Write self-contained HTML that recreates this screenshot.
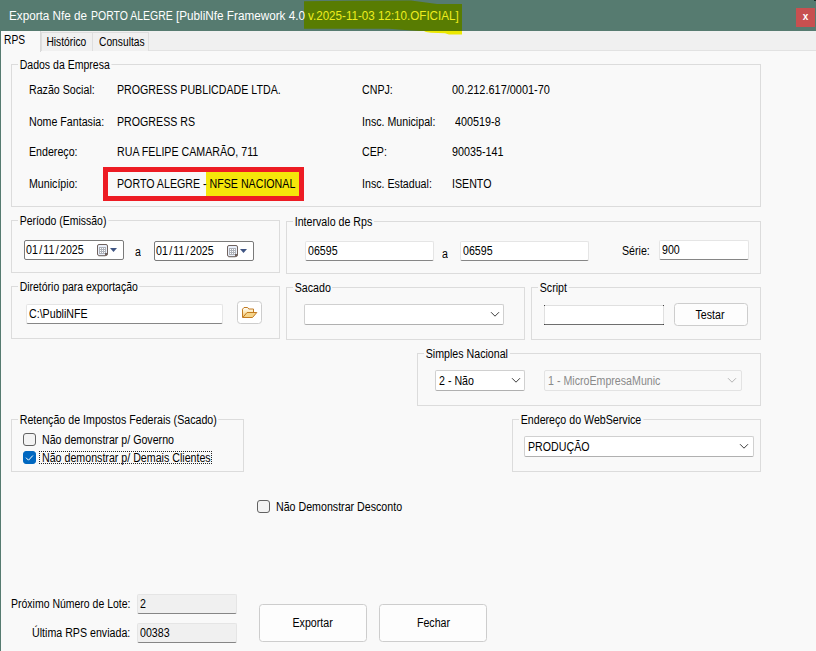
<!DOCTYPE html>
<html><head><meta charset="utf-8">
<style>
*{box-sizing:border-box;margin:0;padding:0}
html,body{width:816px;height:651px;overflow:hidden}
body{background:#f9f9f9;font-family:"Liberation Sans",sans-serif;font-size:11px;color:#000;position:relative}
.abs,.t,.gb,.in,.btn,.cb,.leg{position:absolute}
.t{white-space:nowrap;line-height:15px;height:15px;font-size:12.5px;transform:scaleX(.852);transform-origin:0 0}
.s{display:inline-block;font-size:12.5px;transform:scaleX(.852);transform-origin:0 50%;white-space:nowrap}
.btn .s,.tab .s{transform-origin:50% 50%}
.tab .s{transform:scaleX(.82)}
#tab0 .s{transform-origin:0 50%}
#title{z-index:3;left:0;top:0;width:816px;height:31px;background:#567b70}
#title .txt{position:absolute;z-index:4;left:10px;top:9px;font-size:12px;color:#fff;white-space:nowrap;line-height:15px;transform:scaleX(.951);transform-origin:0 0}
#hl{position:absolute;left:304px;top:1px;width:158px;height:29px;background:#587b03}
#hl2{position:absolute;left:426px;top:29px;width:36px;height:4px;background:#e6e600;border-radius:2px}
#close{z-index:5;left:796px;top:8px;width:19px;height:19px;background:#c75050;color:#fff;font-weight:bold;font-size:10px;text-align:center;line-height:18px}
#lb{left:0;top:30px;width:1px;height:621px;background:#567b70}
#strip{left:1px;top:31px;width:815px;height:20px;background:#f0f0f0;border-bottom:1px solid #e2e2e2}
.tab{position:absolute;top:32px;height:19px;background:#f0f0f0;border:1px solid #dedede;border-bottom:none;font-size:11px;line-height:18px;text-align:center}
#tab0{left:1px;top:31px;width:40px;height:21px;background:#f9f9f9;border:1px solid #d9d9d9;border-bottom:none;border-top:none;border-left:none;text-align:left;padding-left:3px;line-height:19px}
.gb{border:1px solid #dcdcdc}
.leg{background:#f9f9f9;padding:0 2px;line-height:15px;height:15px;white-space:nowrap;font-size:12.5px;transform:scaleX(.852);transform-origin:0 0}
.in{background:#fff;border:1px solid #e5e5e5;border-bottom:1px solid #868686;border-radius:2px;height:20px;line-height:19px;padding-left:3px;white-space:nowrap}
.ro{background:#f0f0f0}
.btn{background:#fdfdfd;border:1px solid #cdcdcd;border-radius:3.5px;text-align:center}
.sel{position:absolute;background:#fff;border:1px solid #d0d0d0;border-bottom:1px solid #b0b0b0;border-radius:2px;height:21px;line-height:20px;padding-left:3px;white-space:nowrap}
.chk{position:absolute;width:13px;height:13px;border:1px solid #626262;border-radius:3px;background:#f3f3f3}
.n{transform:scaleX(.875)!important}
svg.abs{z-index:2}
.sl{padding:0 1.5px}
</style></head><body>
<div id="title" class="abs"><svg style="position:absolute;left:296px;top:0;z-index:3" width="180" height="38" viewBox="296 0 180 38"><polygon points="304,1.3 350,0.8 411,0.6 424,2.2 437,4 462,4 462,31 420,31 405,30 389,28.7 304,28.7" fill="#587c02"/><polygon points="424,31 462,31 462,34.6 449,34.4 445,33.2 431,32.8 426,32" fill="#ece800"/></svg><div class="txt" style="left:9px;transform:scaleX(.974)">Exporta Nfe de</div><div class="txt" style="left:90.6px;transform:scaleX(.873)">PORTO ALEGRE</div><div class="txt" style="left:175.8px;transform:scaleX(.977)">[PubliNfe Framework 4.0</div><div class="txt" style="left:308.2px;transform:scaleX(.968);color:#eeee1e">v.2025-11-03 12:10.OFICIAL]</div></div>
<div id="close" class="abs">x</div>
<div id="lb" class="abs"></div>
<div class="abs" style="z-index:5;left:814px;top:0;width:2px;height:1px;background:#1c2a26"></div>
<div id="strip" class="abs"></div>
<div id="tab0" class="tab"><span class="s">RPS</span></div>
<div class="tab" style="left:41px;width:52px;padding-right:2px"><span class="s">Histórico</span></div>
<div class="tab" style="left:92px;width:57px;padding-left:1px"><span class="s">Consultas</span></div>

<!-- Dados da Empresa -->
<div class="gb" style="left:11px;top:64px;width:750px;height:143px"></div>
<div class="leg" style="left:18px;top:58px;transform:scaleX(.842)">Dados da Empresa</div>
<div class="t" style="left:29px;top:83px">Razão Social:</div>
<div class="t" style="left:117px;top:83px">PROGRESS PUBLICDADE LTDA.</div>
<div class="t" style="left:29px;top:115px">Nome Fantasia:</div>
<div class="t" style="left:117px;top:115px">PROGRESS RS</div>
<div class="t" style="left:29px;top:145px">Endereço:</div>
<div class="t" style="left:117px;top:145px">RUA FELIPE CAMARÃO, 711</div>
<div class="t" style="left:29px;top:177px">Município:</div>
<div class="abs" style="left:206px;top:171px;width:94px;height:26px;background:#f5e60a"></div>
<div class="abs" style="left:103px;top:167px;width:201px;height:34px;border:5px solid #ed1c24"></div>
<div class="t" style="left:117px;top:177px">PORTO ALEGRE - NFSE NACIONAL</div>
<div class="t" style="left:362px;top:83px">CNPJ:</div>
<div class="t n" style="left:452px;top:83px">00.212.617/0001-70</div>
<div class="t" style="left:362px;top:115px">Insc. Municipal:</div>
<div class="t" style="left:455px;top:115px;transform:scaleX(.862)">400519-8</div>
<div class="t" style="left:362px;top:145px">CEP:</div>
<div class="t" style="left:452px;top:145px;transform:scaleX(.862)">90035-141</div>
<div class="t" style="left:362px;top:177px">Insc. Estadual:</div>
<div class="t" style="left:452px;top:177px">ISENTO</div>

<!-- Periodo -->
<div class="gb" style="left:11px;top:220px;width:269px;height:53px"></div>
<div class="leg" style="left:18px;top:214px;transform:scaleX(.8375)">Período (Emissão)</div>
<div class="in" style="left:24px;top:240px;width:100px;border:1px solid #7a7a7a;border-radius:2px;padding-left:1px;line-height:19px"><span class="s">01<span class="sl">/</span>11<span class="sl">/</span>2025</span></div>
<svg class="abs" style="left:97px;top:244px" width="20" height="13" viewBox="0 0 20 13"><rect x="0.5" y="0.5" width="10" height="11" rx="1.5" fill="#eaf0fb" stroke="#6f625e"/><rect x="2" y="3" width="7" height="7" fill="#aeb2ba"/><rect x="3" y="4" width="1" height="1" fill="#fff"/><rect x="3" y="6" width="1" height="1" fill="#fff"/><rect x="3" y="8" width="1" height="1" fill="#fff"/><rect x="5" y="4" width="1" height="1" fill="#fff"/><rect x="5" y="6" width="1" height="1" fill="#fff"/><rect x="5" y="8" width="1" height="1" fill="#fff"/><rect x="7" y="4" width="1" height="1" fill="#fff"/><rect x="7" y="6" width="1" height="1" fill="#fff"/><rect x="7" y="8" width="1" height="1" fill="#fff"/><path d="M8 9h2v2h-2z" fill="#6f625e"/><path d="M1.5 12.3h7" stroke="#cfcfcf" stroke-width="1"/><path d="M13 4h7l-3.5 4z" fill="#3f5583"/></svg>
<div class="t" style="left:135px;top:245px">a</div>
<svg class="abs" style="left:227px;top:245px" width="20" height="13" viewBox="0 0 20 13"><rect x="0.5" y="0.5" width="10" height="11" rx="1.5" fill="#eaf0fb" stroke="#6f625e"/><rect x="2" y="3" width="7" height="7" fill="#aeb2ba"/><rect x="3" y="4" width="1" height="1" fill="#fff"/><rect x="3" y="6" width="1" height="1" fill="#fff"/><rect x="3" y="8" width="1" height="1" fill="#fff"/><rect x="5" y="4" width="1" height="1" fill="#fff"/><rect x="5" y="6" width="1" height="1" fill="#fff"/><rect x="5" y="8" width="1" height="1" fill="#fff"/><rect x="7" y="4" width="1" height="1" fill="#fff"/><rect x="7" y="6" width="1" height="1" fill="#fff"/><rect x="7" y="8" width="1" height="1" fill="#fff"/><path d="M8 9h2v2h-2z" fill="#6f625e"/><path d="M1.5 12.3h7" stroke="#cfcfcf" stroke-width="1"/><path d="M13 4h7l-3.5 4z" fill="#3f5583"/></svg>
<div class="in" style="left:154px;top:241px;width:100px;border:1px solid #7a7a7a;border-radius:2px;padding-left:1px;line-height:19px"><span class="s">01<span class="sl">/</span>11<span class="sl">/</span>2025</span></div>

<!-- Intervalo -->
<div class="gb" style="left:286px;top:221px;width:475px;height:53px"></div>
<div class="leg" style="left:293px;top:215px">Intervalo de Rps</div>
<div class="in" style="left:305px;top:241px;width:129px;padding-left:2px"><span class="s">06595</span></div>
<div class="t" style="left:442px;top:247px">a</div>
<div class="in" style="left:460px;top:241px;width:129px;padding-left:2px"><span class="s">06595</span></div>
<div class="t" style="left:622px;top:244px">Série:</div>
<div class="in" style="left:659px;top:240px;width:90px;padding-left:2px"><span class="s">900</span></div>

<!-- Diretorio -->
<div class="gb" style="left:11px;top:286px;width:269px;height:53px"></div>
<div class="leg" style="left:18px;top:280px;transform:scaleX(.8375)">Diretório para exportação</div>
<div class="in" style="left:26px;top:304px;width:197px;padding-left:2px"><span class="s">C:\PubliNFE</span></div>
<div class="btn" style="left:237px;top:301px;width:25px;height:23px;background:#fff"></div>
<svg class="abs" style="left:241px;top:306px" width="17" height="13" viewBox="0 0 17 13"><defs><linearGradient id="fg" x1="0" y1="0" x2="0" y2="1"><stop offset="0" stop-color="#fff"/><stop offset=".45" stop-color="#fbe8b8"/><stop offset="1" stop-color="#eebb60"/></linearGradient></defs><path d="M1.5 11.5V3.2L3 1.5h3.6L7.8 3h4.7v3.5" fill="url(#fg)" stroke="#c27a20" stroke-width="1"/><path d="M1.8 11.5L6 6.5h9.8L11.5 11.5z" fill="#f6d488" stroke="#c27a20" stroke-width="1" stroke-linejoin="round"/></svg>

<!-- Sacado -->
<div class="gb" style="left:286px;top:287px;width:239px;height:53px"></div>
<div class="leg" style="left:293px;top:281px">Sacado</div>
<div class="sel" style="left:304px;top:304px;width:200px"></div>
<svg class="abs" style="left:490px;top:311px" width="10" height="7" viewBox="0 0 10 7"><path d="M1 1.2 L5 5.2 L9 1.2" fill="none" stroke="#3c3c3c" stroke-width="1"/></svg>

<!-- Script -->
<div class="gb" style="left:531px;top:287px;width:230px;height:53px"></div>
<div class="leg" style="left:538px;top:281px">Script</div>
<div class="in" style="left:544px;top:305px;width:120px;border-radius:0;border-color:#e0e0e0;border-bottom-color:#6e6e6e"></div><div class="abs" style="left:544px;top:305px;width:1px;height:1px;background:#444"></div><div class="abs" style="left:544px;top:324px;width:1px;height:1px;background:#444"></div><div class="abs" style="left:663px;top:305px;width:1px;height:1px;background:#444"></div><div class="abs" style="left:663px;top:324px;width:1px;height:1px;background:#444"></div>
<div class="btn" style="left:674px;top:303px;width:74px;height:23px;line-height:22px;padding-right:2px"><span class="s">Testar</span></div>

<!-- Simples -->
<div class="gb" style="left:417px;top:353px;width:344px;height:53px"></div>
<div class="leg" style="left:424px;top:347px">Simples Nacional</div>
<svg class="abs" style="left:511px;top:377px" width="10" height="7" viewBox="0 0 10 7"><path d="M1 1.2 L5 5.2 L9 1.2" fill="none" stroke="#3c3c3c" stroke-width="1"/></svg>
<div class="sel" style="left:435px;top:370px;width:90px"><span class="s">2 - Não</span></div>
<svg class="abs" style="left:727px;top:377px" width="10" height="7" viewBox="0 0 10 7"><path d="M1 1.2 L5 5.2 L9 1.2" fill="none" stroke="#b4b4b4" stroke-width="1"/></svg>
<div class="sel" style="left:544px;top:370px;width:198px;color:#8a8a8a;background:#f9f9f9;border-color:#e3e3e3"><span class="s">1 - MicroEmpresaMunic</span></div>

<!-- Retencao -->
<div class="gb" style="left:11px;top:419px;width:233px;height:53px"></div>
<div class="leg" style="left:18px;top:413px">Retenção de Impostos Federais (Sacado)</div>
<div class="chk" style="left:23px;top:433px"></div>
<div class="t" style="left:42px;top:433px">Não demonstrar p/ Governo</div>
<div class="chk" style="left:23px;top:451px;background:#0067c0;border-color:#0067c0"><svg width="13" height="13" viewBox="0 0 13 13" style="position:absolute;left:-1px;top:-1px"><path d="M3 6.7 L5.5 9.2 L9.9 4.5" fill="none" stroke="#fff" stroke-width="1"/></svg></div>
<div class="abs" style="left:39px;top:451px;width:173px;height:13px;border:1px dotted #222"></div>
<div class="t" style="left:42px;top:451px">Não demonstrar p/ Demais Clientes</div>

<!-- WebService -->
<div class="gb" style="left:512px;top:419px;width:249px;height:53px"></div>
<div class="leg" style="left:519px;top:413px">Endereço do WebService</div>
<svg class="abs" style="left:739px;top:443px" width="10" height="7" viewBox="0 0 10 7"><path d="M1 1.2 L5 5.2 L9 1.2" fill="none" stroke="#3c3c3c" stroke-width="1"/></svg>
<div class="sel" style="left:524px;top:436px;width:230px"><span class="s">PRODUÇÃO</span></div>

<div class="chk" style="left:257px;top:500px"></div>
<div class="t" style="left:276px;top:500px">Não Demonstrar Desconto</div>

<div class="t" style="left:11px;top:597px;transform:scaleX(.839)">Próximo Número de Lote:</div>
<div class="in ro" style="left:137px;top:594px;width:100px;padding-left:2px"><span class="s">2</span></div>
<div class="t" style="left:32px;top:626px">Última RPS enviada:</div>
<div class="in ro" style="left:137px;top:623px;width:100px;padding-left:2px"><span class="s">00383</span></div>
<div class="btn" style="left:259px;top:604px;width:108px;height:38px;line-height:37px"><span class="s">Exportar</span></div>
<div class="btn" style="left:379px;top:604px;width:108px;height:38px;line-height:37px"><span class="s">Fechar</span></div>
</body></html>
